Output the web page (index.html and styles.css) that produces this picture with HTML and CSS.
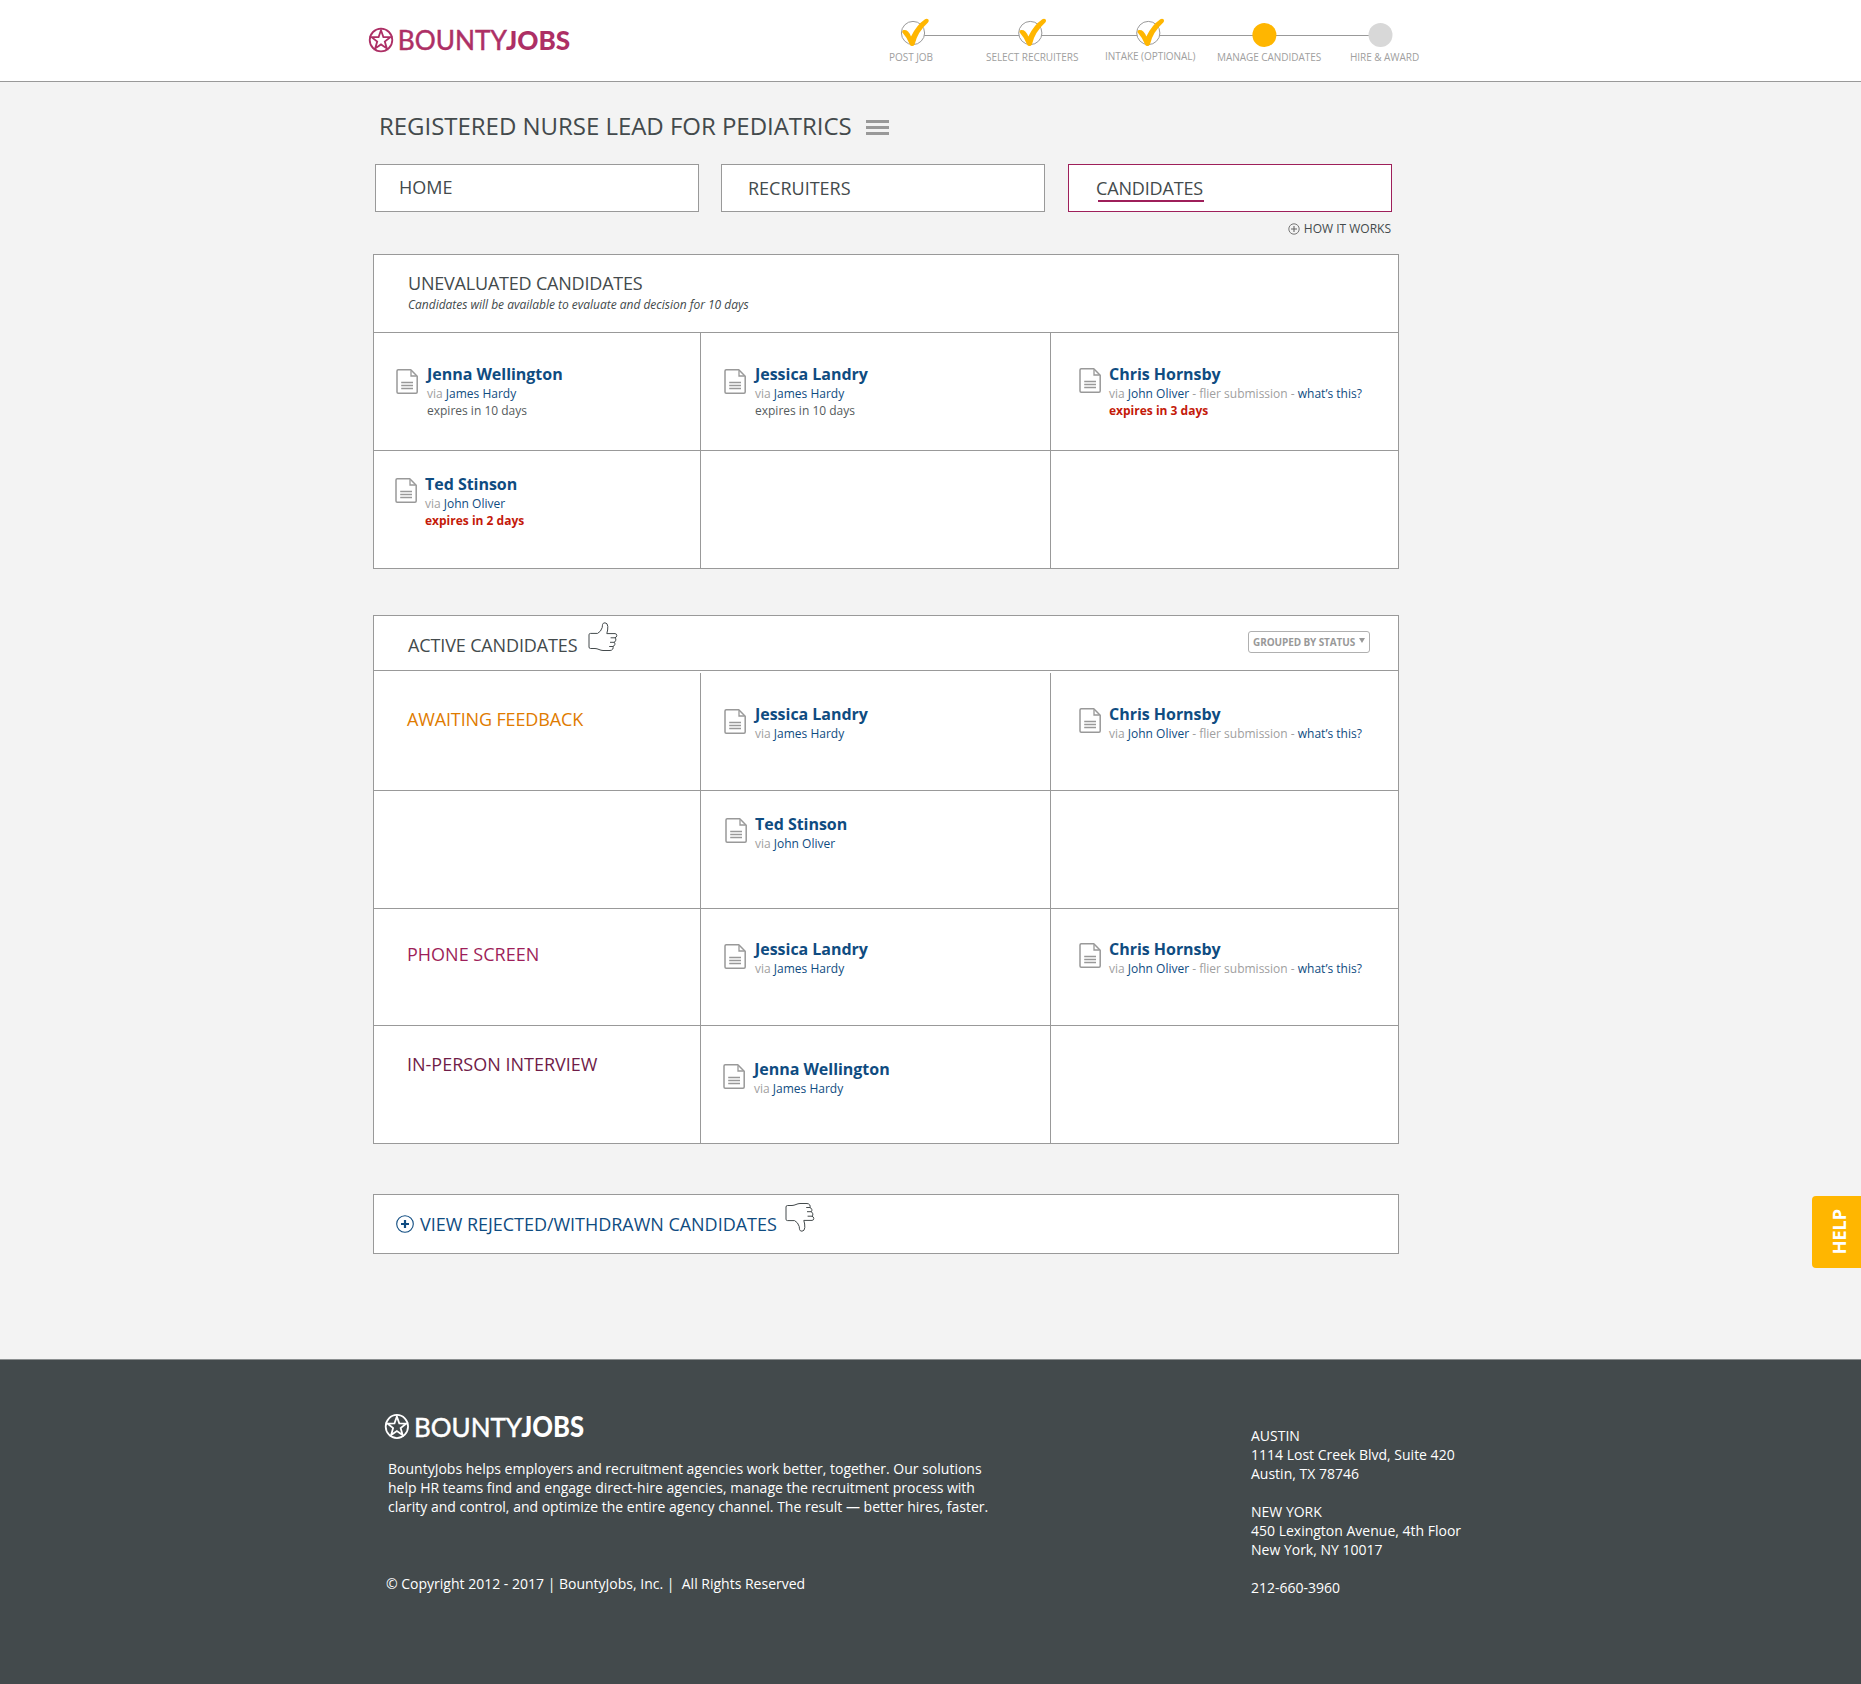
FILE: index.html
```html
<!DOCTYPE html>
<html lang="en">
<head>
<meta charset="utf-8">
<title>BountyJobs - Candidates</title>
<link rel="stylesheet" href="styles.css">
</head>
<body>
<svg class="defs" width="0" height="0" aria-hidden="true">
  <symbol id="doc" viewBox="0 0 22 25">
    <path d="M2.2 .8H14.8L21.2 7.2V23Q21.2 24.2 20 24.2H2.2Q1 24.2 1 23V2Q1 .8 2.2 .8Z" fill="#fff" stroke="#999" stroke-width="1.5" stroke-linejoin="round"/>
    <path d="M15 1.2V7H20.8M5.2 13.5H17M5.2 16.5H17M5.2 19.5H17" fill="none" stroke="#999" stroke-width="1.3"/>
  </symbol>
  <symbol id="badge" viewBox="0 0 26 26">
    <circle cx="13" cy="13" r="11.3" fill="none" stroke="currentColor" stroke-width="1.8"/>
    <path d="M13 3.2L15.4 10L22.4 10.2L16.8 14.5L18.8 21.4L13 17.4L7.2 21.4L9.2 14.5L3.6 10.2L10.6 10Z" fill="none" stroke="currentColor" stroke-width="1.8"/>
  </symbol>
  <symbol id="thumb" viewBox="0 0 30 30">
    <path d="M1 12.8Q1 11.4 2.6 11.4H9.6Q13 9.6 14.2 5.6Q14.4 3.6 14.6 2.4Q15 .8 17 .8Q19.6 1 19.8 4.4Q20 8 18.8 11.6H27Q28.8 11.8 28.8 13.4Q28.6 15.4 27 15.8Q28.2 16.6 27.8 18.2Q27.4 20 26 20.3Q27.2 21 26.8 22.6Q26.2 24.2 24.8 24.5Q25.6 25.6 24.8 27Q24 28.4 22 28.5H15Q13 28.4 11 27.5Q9 26.6 7 26.5H2.6Q1 26.5 1 25Z" fill="#fff" stroke="#444a4c" stroke-width="1" stroke-linejoin="round"/>
    <path d="M27 15.8H23M26 20.3H22.4M24.8 24.5H21.6" fill="none" stroke="#444a4c" stroke-width="1" stroke-linecap="round"/>
  </symbol>
  <symbol id="check" viewBox="0 0 30 30" overflow="visible">
    <circle cx="13" cy="15" r="11.6" fill="#fff" stroke="#999" stroke-width="1"/>
    <path d="M2.2 14.2Q1.8 12.6 3.6 12Q6.4 11.8 8 13.4Q10 15.4 11 18.4Q16.6 7 25 1.2Q27 .2 28.4 1.4Q29.4 2.8 28 4.6Q17.6 14 14.6 26.4Q13.6 28.2 12 28Q10.4 28 9.8 26.4Q7.4 20 2.2 14.2Z" fill="#ffb600"/>
  </symbol>
</svg>

<header class="topbar">
  <svg class="logo" width="208" height="40" viewBox="0 -7 208 40">
    <use href="#badge" width="26" height="26"/>
    <text x="29.8" y="22.8" font-size="27" textLength="109" lengthAdjust="spacingAndGlyphs" font-weight="400" fill="currentColor" stroke="currentColor" stroke-width=".5">BOUNTY</text>
    <text x="138" y="22.8" font-size="27" textLength="64.2" lengthAdjust="spacingAndGlyphs" font-weight="900" fill="currentColor">JOBS</text>
  </svg>
  <div class="stepper">
    <svg class="track" width="510" height="32" viewBox="0 0 510 32">
      <path d="M24 18.5H492" stroke="#999"/>
      <use href="#check" x="10" y="1" width="30" height="30"/>
      <use href="#check" x="127.3" y="1" width="30" height="30"/>
      <use href="#check" x="245.3" y="1" width="30" height="30"/>
      <circle cx="374.4" cy="18" r="12" fill="#ffb600"/>
      <circle cx="490.5" cy="18" r="12" fill="#d8d8d8"/>
    </svg>
    <div class="labels">
      <span>POST JOB</span><span>SELECT RECRUITERS</span><span class="raised">INTAKE (OPTIONAL)</span><span>MANAGE CANDIDATES</span><span>HIRE &amp; AWARD</span>
    </div>
  </div>
</header>

<main class="page">
  <div class="titlebar">
    <h1>REGISTERED NURSE LEAD FOR PEDIATRICS</h1>
    <span class="menu"><i></i><i></i><i></i></span>
  </div>

  <nav class="tabs">
    <a class="tab tab-home">HOME</a>
    <a class="tab tab-recruiters">RECRUITERS</a>
    <a class="tab tab-active"><span>CANDIDATES</span></a>
  </nav>
  <div class="how">
    <svg width="12" height="12" viewBox="0 0 12 12"><path d="M6 3V9M3 6H9" stroke="#666" stroke-width="1.1"/><circle cx="6" cy="6" r="5.2" fill="none" stroke="#777"/></svg>
    <span>HOW IT WORKS</span>
  </div>

  <section class="panel">
    <div class="panel-head head-tall">
      <h2>UNEVALUATED CANDIDATES</h2>
      <p class="sub">Candidates will be available to evaluate and decision for 10 days</p>
    </div>
    <div class="row row-118">
      <div class="cell c1 t30"><svg class="doc" width="22" height="25"><use href="#doc"/></svg><div><b class="name">Jenna Wellington</b><p>via <a>James Hardy</a></p><p class="exp">expires in 10 days</p></div></div>
      <div class="cell c2 t30"><svg class="doc" width="22" height="25"><use href="#doc"/></svg><div><b class="name">Jessica Landry</b><p>via <a>James Hardy</a></p><p class="exp">expires in 10 days</p></div></div>
      <div class="cell c3 t30"><svg class="doc up" width="22" height="25"><use href="#doc"/></svg><div><b class="name">Chris Hornsby</b><p>via <a>John Oliver</a> - flier submission - <a>what’s this?</a></p><p class="soon">expires in 3 days</p></div></div>
    </div>
    <div class="row row-117 last">
      <div class="cell c1 ted t22"><svg class="doc up" width="22" height="25"><use href="#doc"/></svg><div><b class="name">Ted Stinson</b><p>via <a>John Oliver</a></p><p class="soon">expires in 2 days</p></div></div>
      <div class="cell"></div>
      <div class="cell"></div>
    </div>
  </section>

  <section class="panel panel-active">
    <div class="panel-head head-active">
      <h2>ACTIVE CANDIDATES</h2>
      <svg class="thumb-up" width="30" height="30"><use href="#thumb"/></svg>
      <button class="group">GROUPED BY STATUS<i></i></button>
    </div>
    <div class="row row-120 detached">
      <div class="cell status awaiting">AWAITING FEEDBACK</div>
      <div class="cell c2 t30"><svg class="doc" width="22" height="25"><use href="#doc"/></svg><div><b class="name">Jessica Landry</b><p>via <a>James Hardy</a></p></div></div>
      <div class="cell c3 t30"><svg class="doc up" width="22" height="25"><use href="#doc"/></svg><div><b class="name">Chris Hornsby</b><p>via <a>John Oliver</a> - flier submission - <a>what’s this?</a></p></div></div>
    </div>
    <div class="row row-118">
      <div class="cell"></div>
      <div class="cell c2 ted2 t22"><svg class="doc up" width="22" height="25"><use href="#doc"/></svg><div><b class="name">Ted Stinson</b><p>via <a>John Oliver</a></p></div></div>
      <div class="cell"></div>
    </div>
    <div class="row row-117">
      <div class="cell status phone">PHONE SCREEN</div>
      <div class="cell c2 t29"><svg class="doc" width="22" height="25"><use href="#doc"/></svg><div><b class="name">Jessica Landry</b><p>via <a>James Hardy</a></p></div></div>
      <div class="cell c3 t29"><svg class="doc up" width="22" height="25"><use href="#doc"/></svg><div><b class="name">Chris Hornsby</b><p>via <a>John Oliver</a> - flier submission - <a>what’s this?</a></p></div></div>
    </div>
    <div class="row row-117 last">
      <div class="cell status inperson">IN-PERSON INTERVIEW</div>
      <div class="cell c2 jenna2 t32"><svg class="doc" width="22" height="25"><use href="#doc"/></svg><div><b class="name">Jenna Wellington</b><p>via <a>James Hardy</a></p></div></div>
      <div class="cell"></div>
    </div>
  </section>

  <section class="panel rejected">
    <svg class="plus" width="18" height="18" viewBox="0 0 18 18"><circle cx="9" cy="9" r="8.3" fill="none" stroke="#0f4c81" stroke-width="1.1"/><path d="M9 5V13M5 9H13" stroke="#0f4c81" stroke-width="2.2"/></svg>
    <h2>VIEW REJECTED/WITHDRAWN CANDIDATES</h2>
    <svg class="thumb-down" width="30" height="30"><use href="#thumb"/></svg>
  </section>
</main>

<footer class="footer">
  <div class="about">
    <svg class="logo-foot" width="206" height="41" viewBox="0 -7 208 40" preserveAspectRatio="none">
      <use href="#badge" width="26" height="26"/>
      <text x="30.3" y="22.8" font-size="27" textLength="109" lengthAdjust="spacingAndGlyphs" font-weight="400" fill="currentColor" stroke="currentColor" stroke-width=".5">BOUNTY</text>
      <text x="138.5" y="22.8" font-size="27" textLength="63.5" lengthAdjust="spacingAndGlyphs" font-weight="900" fill="currentColor">JOBS</text>
    </svg>
    <p class="blurb">BountyJobs helps employers and recruitment agencies work better, together. Our solutions<br>help HR teams find and engage direct-hire agencies, manage the recruitment process with<br>clarity and control, and optimize the entire agency channel. The result — better hires, faster.</p>
    <p class="copy">© Copyright 2012 - 2017 | BountyJobs, Inc. |&nbsp; All Rights Reserved</p>
  </div>
  <address>AUSTIN<br>1114 Lost Creek Blvd, Suite 420<br>Austin, TX 78746<br><br>NEW YORK<br>450 Lexington Avenue, 4th Floor<br>New York, NY 10017<br><br>212-660-3960</address>
</footer>

<a class="help"><span>HELP</span></a>
</body>
</html>
```

FILE: styles.css
```css
* { box-sizing: border-box; }
body {
  margin: 0;
  background: #f3f3f3;
  color: #434a4c;
  font-family: "Open Sans", "Noto Sans", sans-serif;
  position: relative;
}
h1, h2, p { margin: 0; font-weight: 400; }
svg { display: block; flex: none; }
.defs { position: absolute; }
svg text { font-family: Lato, sans-serif; }

/* Header */
.topbar {
  height: 82px;
  background: #fff;
  border-bottom: 1px solid #999;
  display: flex;
  padding-left: 368px;
}
.logo { margin-top: 20px; color: #ad2f65; }
.stepper { margin-left: 314px; padding-top: 17px; }
.labels {
  display: grid;
  grid-template-columns: 97px 119px 112px 133px auto;
  margin-left: -1px;
  font-size: 10px;
  line-height: 14px;
  letter-spacing: -.05px;
  color: #a0a0a0;
  white-space: nowrap;
  padding-top: 1px;
}
.raised { margin-top: -1px; }

/* Page */
.page { width: 1026px; margin-left: 373px; }
.titlebar { display: flex; height: 82px; padding: 25px 0 0 6px; }
h1 { font-size: 24px; line-height: 38px; width: 473px; letter-spacing: -.03px; white-space: nowrap; }
.menu { margin: 13px 0 0 14px; width: 23px; display: grid; gap: 3px; align-content: start; }
.menu i { height: 3px; background: #999; }

.tabs { display: flex; height: 48px; padding-left: 2px; }
.tab {
  width: 324px;
  height: 48px;
  background: #fff;
  border: 1px solid #999;
  font-size: 18px;
  line-height: 24px;
}
.tab-home { padding: 10px 0 0 23px; }
.tab-recruiters { margin-left: 22px; padding: 11px 0 0 26px; }
.tab-active { margin-left: 23px; padding: 11px 0 0 27px; border-color: #9e1f5a; letter-spacing: -.15px; }
.tab-active span { display: block; width: 108px; height: 26px; background: linear-gradient(#9e1f5a, #9e1f5a) 2px 24px / 106px 2px no-repeat; }
.how {
  display: flex;
  justify-content: flex-end;
  gap: 4px;
  height: 42px;
  padding: 8px 8px 0 0;
  font-size: 12px;
  line-height: 17px;
}
.how svg { margin-top: 3px; }

/* Panels */
.panel { background: #fff; border: 1px solid #999; }
.panel-active { margin-top: 46px; }
.panel-head { border-bottom: 1px solid #999; }
h2 { font-size: 18px; line-height: 24px; white-space: nowrap; }
.head-tall { height: 78px; padding: 16px 0 0 34px; }
.head-tall h2 { letter-spacing: -.2px; }
.sub { font-size: 12px; line-height: 17px; font-style: italic; letter-spacing: -.015px; margin-top: 1px; }
.head-active { height: 55px; display: flex; padding: 17px 28px 0 34px; }
.head-active h2 { width: 170px; letter-spacing: -.13px; }
.thumb-up { margin: -11px 0 0 10px; }
.group {
  margin: -2px 0 0 auto;
  width: 122px;
  height: 22px;
  padding: 0 0 1px 4px;
  display: flex;
  align-items: center;
  gap: 4px;
  background: #fff;
  border: 1px solid #b0b0b0;
  border-radius: 3px;
  font: bold 10px "Open Sans", sans-serif;
  letter-spacing: -.1px;
  color: #999;
  white-space: nowrap;
}
.group i { border: 3.5px solid transparent; border-top: 5px solid #999; border-bottom: 0; margin-top: -2px; }

.row { display: grid; grid-template-columns: 327px 350px 347px; border-bottom: 1px solid #999; }
.row-117 { height: 117px; }
.row-118 { height: 118px; }
.row-120 { height: 120px; }
.last { border-bottom: 0; }
.detached .cell { margin-top: 2px; }
.cell { display: flex; border-right: 1px solid #999; }
.cell:last-child { border-right: 0; }
.t22 { padding-top: 22px; }
.t29 { padding-top: 29px; }
.t30 { padding-top: 30px; }
.t32 { padding-top: 32px; }
.c1 { padding-left: 22px; gap: 9px; }
.c2 { padding-left: 23px; gap: 9px; }
.c3 { padding-left: 28px; gap: 8px; }
.ted { padding-left: 21px; gap: 8px; }
.ted2 { padding-left: 24px; gap: 8px; }
.jenna2 { padding-left: 22px; gap: 9px; }
.doc { margin-top: 6px; }
.doc.up { margin-top: 5px; }
.name { display: block; font-size: 16px; line-height: 22px; letter-spacing: -.03px; color: #0f4c81; }
.cell p { font-size: 12px; line-height: 17px; color: #a0a0a0; white-space: nowrap; }
.cell a { color: #0f4c81; }
.cell p.exp { color: #555b5d; }
.cell p.soon { color: #c41a0a; font-weight: 700; }
.status { font-size: 18px; line-height: 24px; padding-left: 33px; }
.awaiting { padding-top: 34px; color: #e07b00; letter-spacing: -.14px; }
.phone { padding-top: 33px; color: #9e1f5a; }
.inperson { padding-top: 26px; color: #701c48; }

.rejected { margin-top: 50px; height: 60px; display: flex; padding: 17px 0 0 22px; color: #0f4c81; }
.rejected h2 { width: 357px; letter-spacing: -.03px; }
.plus { margin: 3px 6px 0 0; }
.thumb-down { margin: -10px 0 0 8px; transform: scaleY(-1); }

/* Footer */
.footer {
  margin-top: 105px;
  height: 325px;
  border-top: 1px solid #8b8f90;
  background: #434a4c;
  color: #fff;
  display: flex;
  padding-left: 383px;
  font-size: 14px;
  line-height: 19px;
  white-space: nowrap;
}
.about { width: 867px; padding-top: 46px; }
.logo-foot { margin-left: 1px; }
.blurb { margin: 12px 0 0 5px; }
.copy { margin: 58px 0 0 3px; }
address { font-style: normal; padding: 66px 0 0 1px; }

/* Help tab */
.help {
  position: absolute;
  right: 0;
  top: 1196px;
  width: 49px;
  height: 72px;
  background: #ffb600;
  border-radius: 4px 0 0 4px;
  color: #fff;
  font-size: 18px;
  font-weight: 700;
  display: flex;
  align-items: center;
  justify-content: center;
}
.help span { writing-mode: vertical-rl; transform: rotate(180deg); line-height: 22px; margin-left: 5px; }
```
